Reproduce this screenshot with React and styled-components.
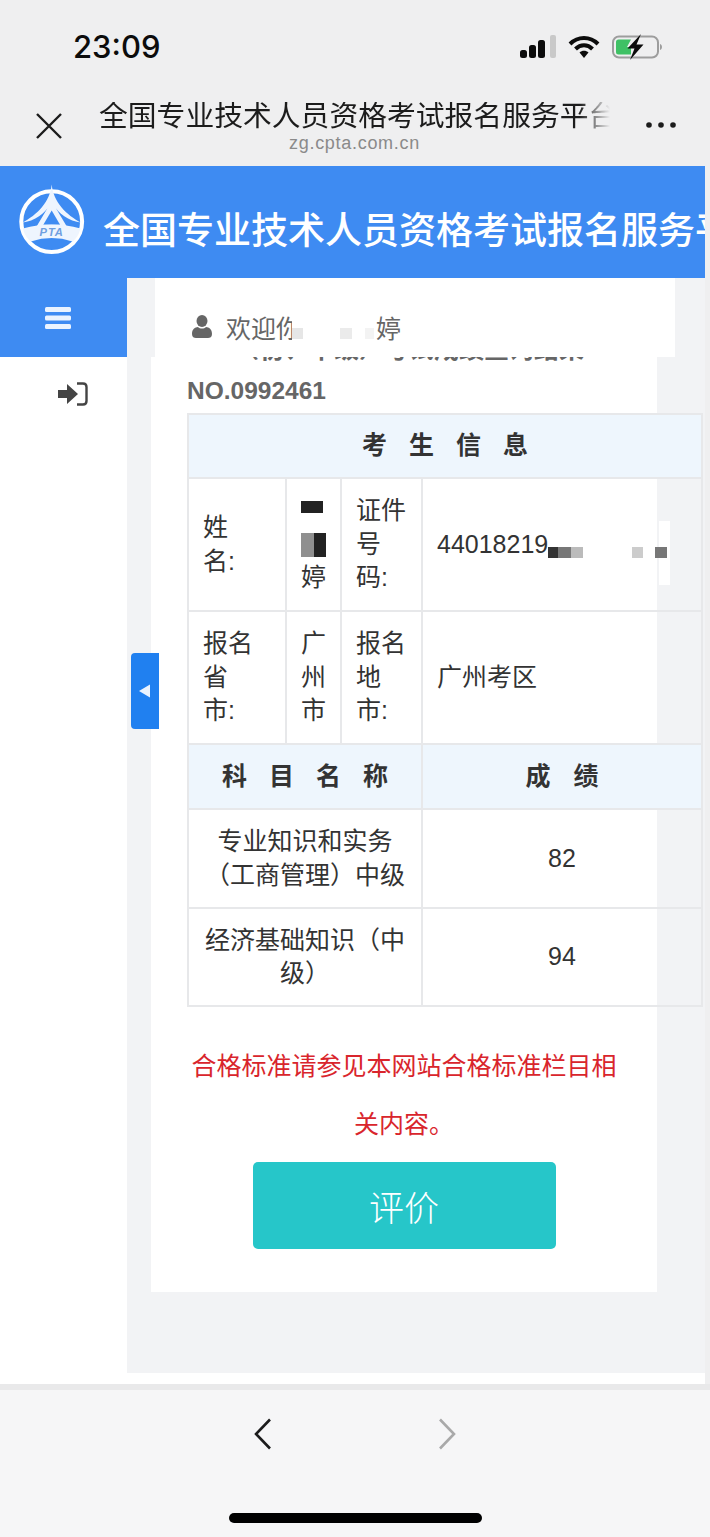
import React from "react";
import styled, { createGlobalStyle } from "styled-components";

const Global = createGlobalStyle`
  html, body { margin: 0; padding: 0; background: #efeff0; }
  body { width: 710px; height: 1537px; overflow: hidden; font-family: "Liberation Sans", "Noto Sans CJK SC", sans-serif; }
  * { box-sizing: border-box; }
`;

const Page = styled.div`
  width: 710px;
  height: 1537px;
  display: flex;
  flex-direction: column;
  background: #efeff0;
  overflow: hidden;
`;

const StatusBar = styled.div`
  height: 94px;
  display: flex;
  align-items: flex-start;
  justify-content: space-between;
  padding: 29px 48px 0 73px;
`;
const Clock = styled.div`
  font-family: Inter, "Liberation Sans", sans-serif;
  font-size: 31px;
  line-height: 36px;
  font-weight: 500;
  color: #0c0c0c;
`;
const StatusIcons = styled.div`
  display: flex;
  align-items: center;
  gap: 12px;
  padding-top: 5px;
`;

const NavBar = styled.div`
  height: 72px;
  display: flex;
  align-items: flex-start;
  padding-left: 36px;
`;
const CloseIcon = styled.svg`
  width: 26px;
  height: 26px;
  margin-top: 19px;
  flex: none;
`;
const TitleColumn = styled.div`
  width: 511px;
  margin: 8px 36px 0 37px;
  display: flex;
  flex-direction: column;
  align-items: center;
  flex: none;
`;
const PageTitle = styled.div`
  width: 100%;
  height: 29px;
  font-size: 28.8px;
  line-height: 29px;
  color: #1c1c1c;
  white-space: nowrap;
  overflow: hidden;
  -webkit-mask-image: linear-gradient(to right, #000 94%, transparent 100%);
  mask-image: linear-gradient(to right, #000 94%, transparent 100%);
`;
const PageUrl = styled.div`
  font-size: 18px;
  line-height: 24px;
  letter-spacing: 0.7px;
  color: #8a8a8a;
`;
const MoreIcon = styled.svg`
  width: 30px;
  height: 6px;
  margin-top: 28px;
  flex: none;
`;

const Header = styled.header`
  width: 705px;
  height: 112px;
  flex: none;
  display: flex;
  align-items: center;
  padding-left: 16px;
  gap: 15px;
  background: #3e8bf2;
  overflow: hidden;
`;
const LogoMark = styled.svg`
  width: 72px;
  height: 76px;
  flex: none;
  margin-top: -3px;
`;
const SiteName = styled.div`
  font-size: 37px;
  font-weight: 500;
  line-height: 44px;
  color: #fff;
  white-space: nowrap;
  margin-top: 20px;
`;

const Main = styled.div`
  width: 705px;
  height: 1095px;
  flex: none;
  display: flex;
  background: #fff;
`;
const Sidebar = styled.aside`
  width: 127px;
  flex: none;
  background: #fff;
`;
const MenuToggle = styled.div`
  height: 79px;
  background: #3e8bf2;
  display: flex;
  align-items: center;
  justify-content: center;
  padding: 0 11px 0 0;
`;
const SideLink = styled.div`
  display: flex;
  justify-content: flex-start;
  padding: 25px 0 0 58px;
`;

const Content = styled.main`
  position: relative;
  flex: 1;
  min-width: 0;
  background: #f2f3f5;
`;
const WelcomeBar = styled.div`
  width: 520px;
  height: 79px;
  margin-left: 28px;
  padding: 18px 0 0 37px;
  display: flex;
  align-items: center;
  background: #fff;
  font-size: 25px;
  color: #666;
`;
const UserIcon = styled.svg`
  width: 20px;
  height: 23px;
  flex: none;
  margin-right: 14px;
`;
const Clip = styled.span`
  display: inline-block;
  flex: none;
  width: ${(p) => p.$w}px;
  overflow: hidden;
  white-space: nowrap;
`;
const Tile = styled.span`
  position: relative;
  z-index: 1;
  display: inline-block;
  flex: none;
  width: ${(p) => p.$w}px;
  height: ${(p) => p.$h || 11}px;
  margin-left: ${(p) => p.$gap || 0}px;
  margin-top: ${(p) => p.$top || 0}px;
  background: ${(p) => p.$c};
`;

const Panel = styled.section`
  width: 506px;
  height: 935px;
  margin-left: 24px;
  padding: 0 36px;
  background: #fff;
`;
const CutHeading = styled.div`
  height: 5px;
  display: flex;
  align-items: flex-end;
  overflow: hidden;
  padding-left: 22px;
  font-size: 25px;
  line-height: 25px;
  font-weight: 700;
  color: #666;
  white-space: nowrap;
`;
const Serial = styled.div`
  margin-top: 12px;
  font-size: 24.5px;
  line-height: 33px;
  font-weight: 700;
  color: #666;
`;
const Table = styled.table`
  width: 516px;
  margin-top: 6px;
  table-layout: fixed;
  border-collapse: collapse;
  font-size: 25px;
  line-height: 33.5px;
  color: #333;
`;
const Row = styled.tr`
  height: ${(p) => p.$h}px;
`;
const HeadCell = styled.th`
  border: 2px solid #e7e8ea;
  background: #eef6fd;
  padding: 0;
  font-weight: 700;
  text-align: center;
  text-indent: ${(p) => p.$spread}px;
  letter-spacing: ${(p) => p.$spread}px;
  color: #333;
`;
const Cell = styled.td`
  position: relative;
  border: 2px solid #e7e8ea;
  padding: 0 14px;
  vertical-align: middle;
  text-align: ${(p) => (p.$center ? "center" : "left")};
`;
const NarrowCell = styled(Cell)`
  padding: 0 0 0 14px;
`;
const MosaicLine = styled.div`
  display: flex;
  height: 33.5px;
  align-items: center;
`;
const IdLine = styled.div`
  display: flex;
  align-items: center;
`;
const Patch = styled.span`
  position: absolute;
  left: 236px;
  top: 42px;
  width: 11px;
  height: 64px;
  background: #fff;
`;
const Notice = styled.p`
  margin: 30px 0 0;
  font-size: 25px;
  line-height: 58px;
  color: #d9252c;
  text-align: center;
`;
const RateButton = styled.button`
  display: block;
  width: 303px;
  height: 87px;
  margin: 9px auto 0;
  border: 0;
  border-radius: 5px;
  background: #26c6c9;
  color: #fff;
  font-family: inherit;
  font-size: 35px;
  font-weight: 300;
`;
const CollapseTab = styled.div`
  position: absolute;
  left: 4px;
  top: 375px;
  width: 28px;
  height: 76px;
  display: flex;
  align-items: center;
  justify-content: center;
  background: #2080f0;
  border-radius: 4px 0 0 4px;
`;

const FootBand = styled.div`
  width: 705px;
  height: 11px;
  flex: none;
  background: #fff;
`;
const ToolBar = styled.div`
  flex: 1;
  display: flex;
  flex-direction: column;
  align-items: center;
  border-top: 6px solid #e9e9ea;
  background: #f6f6f7;
`;
const NavArrows = styled.div`
  display: flex;
  gap: 166px;
  margin-top: 28px;
`;
const Arrow = styled.svg`
  width: 18px;
  height: 32px;
`;
const HomeBar = styled.div`
  width: 253px;
  height: 10px;
  margin-top: 63px;
  border-radius: 5px;
  background: #000;
`;

const Signal = () => (
  <svg width="36" height="24" viewBox="0 0 36 24">
    <rect x="0" y="15" width="7" height="8" rx="2.5" fill="#0c0c0c" />
    <rect x="9" y="10" width="7" height="13" rx="2.5" fill="#0c0c0c" />
    <rect x="18" y="5" width="7" height="18" rx="2.5" fill="#0c0c0c" />
    <rect x="30" y="0" width="6" height="23" rx="2" fill="#c9c9c9" />
  </svg>
);
const Wifi = () => (
  <svg width="32" height="24" viewBox="0 0 32 24">
    <path d="M2 9C10 1 22 1 30 9" fill="none" stroke="#0c0c0c" strokeWidth="4" />
    <path d="M7.5 14C12.5 9 19.5 9 24.5 14" fill="none" stroke="#0c0c0c" strokeWidth="4" />
    <path d="M11.5 17.5C14 15.2 18 15.2 20.5 17.5L16 23Z" fill="#0c0c0c" />
  </svg>
);
const Battery = () => (
  <svg width="50" height="26" viewBox="0 0 50 26">
    <rect x="1" y="2.5" width="45" height="21" rx="6" fill="none" stroke="#9d9d9d" strokeWidth="2" />
    <path d="M48 10V16C49.5 15.5 50 14 50 13C50 12 49.5 10.500 48 10Z" fill="#9d9d9d" />
    <path d="M4 8Q4 5.500 6.500 5.500H19L15 13H19V20.500H6.500Q4 20.500 4 18Z" fill="#3fc165" />
    <path d="M29 0L15.500 14.500H22.500L18 26L31.500 10.500H24.500Z" fill="#0c0c0c" />
  </svg>
);
const Logo = () => (
  <LogoMark viewBox="40 32 232 240">
    <circle cx="155" cy="154" r="98" fill="none" stroke="#fff" strokeWidth="13" />
    <path
      d="M155 34C160 88 200 132 252 158C208 152 176 128 162 100L210 180Q155 168 100 180L148 100C134 128 102 152 58 158C110 132 150 88 155 34Z"
      fill="#eef5fe"
    />
    <path d="M155 118L128 164H182Z" fill="#3e8bf2" />
    <path d="M62 176Q155 150 248 176Q240 205 222 218Q155 196 88 218Q70 205 62 176Z" fill="#eef5fe" />
    <text x="155" y="199" textAnchor="middle" fontFamily="Liberation Sans" fontStyle="italic" fontWeight="700" fontSize="36" letterSpacing="3" fill="#6f9fe0">PTA</text>
  </LogoMark>
);

export default function App() {
  return (
    <Page>
      <Global />
      <StatusBar>
        <Clock>23:09</Clock>
        <StatusIcons>
          <Signal />
          <Wifi />
          <Battery />
        </StatusIcons>
      </StatusBar>
      <NavBar>
        <CloseIcon viewBox="0 0 26 26">
          <path d="M1 1L25 25M25 1L1 25" stroke="#1c1c1c" strokeWidth="2.4" fill="none" />
        </CloseIcon>
        <TitleColumn>
          <PageTitle>全国专业技术人员资格考试报名服务平台</PageTitle>
          <PageUrl>zg.cpta.com.cn</PageUrl>
        </TitleColumn>
        <MoreIcon viewBox="0 0 30 6">
          <circle cx="3" cy="3" r="2.8" fill="#1c1c1c" />
          <circle cx="15" cy="3" r="2.8" fill="#1c1c1c" />
          <circle cx="27" cy="3" r="2.8" fill="#1c1c1c" />
        </MoreIcon>
      </NavBar>
      <Header>
        <Logo />
        <SiteName>全国专业技术人员资格考试报名服务平台</SiteName>
      </Header>
      <Main>
        <Sidebar>
          <MenuToggle>
            <svg width="26" height="22" viewBox="0 0 26 22">
              <rect x="0" y="0" width="26" height="5" rx="1.500" fill="#eaf3ff" />
              <rect x="0" y="8.500" width="26" height="5" rx="1.500" fill="#eaf3ff" />
              <rect x="0" y="17" width="26" height="5" rx="1.500" fill="#eaf3ff" />
            </svg>
          </MenuToggle>
          <SideLink>
            <svg width="30" height="24" viewBox="0 0 30 24">
              <path d="M0 8H9V2L20 12L9 22V16H0Z" fill="#444" />
              <path d="M19 1.500H25Q28.500 1.500 28.500 5V19Q28.500 22.500 25 22.500H19" fill="none" stroke="#444" strokeWidth="2.400" />
            </svg>
          </SideLink>
        </Sidebar>
        <Content>
          <WelcomeBar>
            <UserIcon viewBox="0 0 20 23">
              <ellipse cx="10" cy="6" rx="5.500" ry="6" fill="#666" />
              <path d="M0 19C0 14 3 12.500 6 12C8 14 12 14 14 12C17 12.500 20 14 20 19C20 22 18 23 16 23H4C2 23 0 22 0 19Z" fill="#666" />
            </UserIcon>
            欢迎
            <Clip $w={16}>你</Clip>
            <Tile $c="#e6e6e6" $w={11} $top={13} />
            <Tile $c="#ebebeb" $w={12} $gap={37} $top={13} />
            <Tile $c="#f3f3f3" $w={9} $gap={13} $top={13} />
            <Clip $w={27} style={{ marginLeft: 2 }}>婷</Clip>
          </WelcomeBar>
          <Panel>
            <CutHeading>一（初、中级）考试成绩查询结果</CutHeading>
            <Serial>NO.0992461</Serial>
            <Table>
              <colgroup>
                <col style={{ width: 98 }} />
                <col style={{ width: 55 }} />
                <col style={{ width: 81 }} />
                <col />
              </colgroup>
              <tbody>
                <Row $h={64}>
                  <HeadCell colSpan={4} $spread={22}>考生信息</HeadCell>
                </Row>
                <Row $h={133}>
                  <Cell>姓<br />名:</Cell>
                  <NarrowCell>
                    <MosaicLine><Tile $c="#222" $w={22} $h={12} $top={-8} /></MosaicLine>
                    <MosaicLine>
                      <Tile $c="linear-gradient(to right, #8f8f8f 50%, #222 50%)" $w={25} $h={24} />
                    </MosaicLine>
                    婷
                  </NarrowCell>
                  <NarrowCell>证件<br />号<br />码:</NarrowCell>
                  <Cell>
                    <IdLine>
                      44018219
                      <Tile $c="#333" $w={10} $top={15} />
                      <Tile $c="#777" $w={13} $top={15} />
                      <Tile $c="#bbb" $w={12} $top={15} />
                      <Tile $c="#ccc" $w={11} $gap={49} $top={15} />
                      <Tile $c="#777" $w={12} $gap={12} $top={15} />
                    </IdLine>
                    <Patch />
                  </Cell>
                </Row>
                <Row $h={133}>
                  <Cell>报名<br />省<br />市:</Cell>
                  <NarrowCell>广<br />州<br />市</NarrowCell>
                  <NarrowCell>报名<br />地<br />市:</NarrowCell>
                  <Cell>广州考区</Cell>
                </Row>
                <Row $h={65}>
                  <HeadCell colSpan={3} $spread={22}>科目名称</HeadCell>
                  <HeadCell $spread={23}>成绩</HeadCell>
                </Row>
                <Row $h={99}>
                  <Cell colSpan={3} $center>专业知识和实务（工商管理）中级</Cell>
                  <Cell $center>82</Cell>
                </Row>
                <Row $h={98}>
                  <Cell colSpan={3} $center>经济基础知识（中级）</Cell>
                  <Cell $center>94</Cell>
                </Row>
              </tbody>
            </Table>
            <Notice>合格标准请参见本网站合格标准栏目相关内容。</Notice>
            <RateButton>评价</RateButton>
          </Panel>
          <CollapseTab>
            <svg width="12" height="16" viewBox="0 0 12 16">
              <path d="M0 8L11 1.500V14.500Z" fill="#eaf3ff" />
            </svg>
          </CollapseTab>
        </Content>
      </Main>
      <FootBand />
      <ToolBar>
        <NavArrows>
          <Arrow viewBox="0 0 18 32">
            <path d="M16 1.500L2 16L16 30.500" fill="none" stroke="#1c1c1c" strokeWidth="2.600" />
          </Arrow>
          <Arrow viewBox="0 0 18 32">
            <path d="M2 1.500L16 16L2 30.500" fill="none" stroke="#a9a9a9" strokeWidth="2.600" />
          </Arrow>
        </NavArrows>
        <HomeBar />
      </ToolBar>
    </Page>
  );
}
